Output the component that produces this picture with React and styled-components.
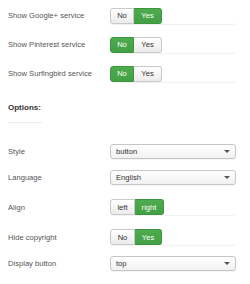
import React from "react";
import styled, { createGlobalStyle } from "styled-components";

const Global = createGlobalStyle`
  html, body { margin: 0; padding: 0; background: #fff; }
  body { font-family: "Liberation Sans", Arial, sans-serif; width: 250px; height: 284px; overflow: hidden; }
`;

const Page = styled.div`
  padding: 1px 0 0 8px;
  display: flex;
  flex-direction: column;
`;

const Row = styled.div`
  display: grid;
  grid-template-columns: 102px 126px;
  align-items: center;
  height: ${(p) => p.$h}px;
  margin-top: ${(p) => p.$mt || 0}px;
`;

const Label = styled.div`
  font-size: 7.6px;
  color: #555;
`;

const Heading = styled.div`
  margin-top: 12px;
  height: 16px;
  line-height: 16px;
  font-size: 8px;
  font-weight: bold;
  color: #333;
`;

const Rule = styled.div`
  margin-top: 6px;
  width: 34px;
  height: 1px;
  background: #ececec;
`;

const Group = styled.div`
  display: flex;
  height: 16px;
  border-radius: 3px;
  box-shadow: 0 1px 1px rgba(0, 0, 0, 0.06);
`;

const Btn = styled.div`
  width: ${(p) => p.$w}px;
  box-sizing: border-box;
  display: flex;
  align-items: center;
  justify-content: center;
  font-size: 7.6px;
  color: ${(p) => (p.$on ? "#fff" : "#333")};
  background: ${(p) =>
    p.$on ? "linear-gradient(#4fab4f, #439f43)" : "linear-gradient(#fff, #ebebeb)"};
  border: 1px solid ${(p) => (p.$on ? "#3d953d" : "#c9c9c9")};
  &:first-child { border-radius: 3px 0 0 3px; }
  &:last-child { border-radius: 0 3px 3px 0; }
  & + & { border-left: none; }
`;

const Select = styled.div`
  position: relative;
  box-sizing: border-box;
  width: 126px;
  height: 15px;
  border: 1px solid #c6c6c6;
  border-radius: 3px;
  background: linear-gradient(#fff, #f1f1f1);
  box-shadow: 0 1px 1px rgba(0, 0, 0, 0.05);
  display: flex;
  align-items: center;
  padding-left: 5px;
  font-size: 7.6px;
  color: #333;
`;

const Caret = styled.span`
  position: absolute;
  right: 5px;
  top: 5px;
  width: 0;
  height: 0;
  border-left: 3px solid transparent;
  border-right: 3px solid transparent;
  border-top: 3px solid #555;
`;

function Toggle({ options, active, widths }) {
  return (
    <Group>
      {options.map((o, i) => (
        <Btn key={o} $on={i === active} $w={widths[i]}>
          {o}
        </Btn>
      ))}
    </Group>
  );
}

function Dropdown({ value }) {
  return (
    <Select>
      {value}
      <Caret />
    </Select>
  );
}

export default function App() {
  return (
    <Page>
      <Global />
      <Row $h={29}>
        <Label>Show Google+ service</Label>
        <Toggle options={["No", "Yes"]} active={1} widths={[24, 28]} />
      </Row>
      <Row $h={29}>
        <Label>Show Pinterest service</Label>
        <Toggle options={["No", "Yes"]} active={0} widths={[24, 28]} />
      </Row>
      <Row $h={29}>
        <Label>Show Surfingbird service</Label>
        <Toggle options={["No", "Yes"]} active={0} widths={[24, 28]} />
      </Row>
      <Heading>Options:</Heading>
      <Rule />
      <Row $h={26} $mt={15}>
        <Label>Style</Label>
        <Dropdown value="button" />
      </Row>
      <Row $h={26}>
        <Label>Language</Label>
        <Dropdown value="English" />
      </Row>
      <Row $h={32} $mt={1}>
        <Label>Align</Label>
        <Toggle options={["left", "right"]} active={1} widths={[25, 29]} />
      </Row>
      <Row $h={28}>
        <Label>Hide copyright</Label>
        <Toggle options={["No", "Yes"]} active={1} widths={[25, 27]} />
      </Row>
      <Row $h={24}>
        <Label>Display button</Label>
        <Dropdown value="top" />
      </Row>
    </Page>
  );
}
